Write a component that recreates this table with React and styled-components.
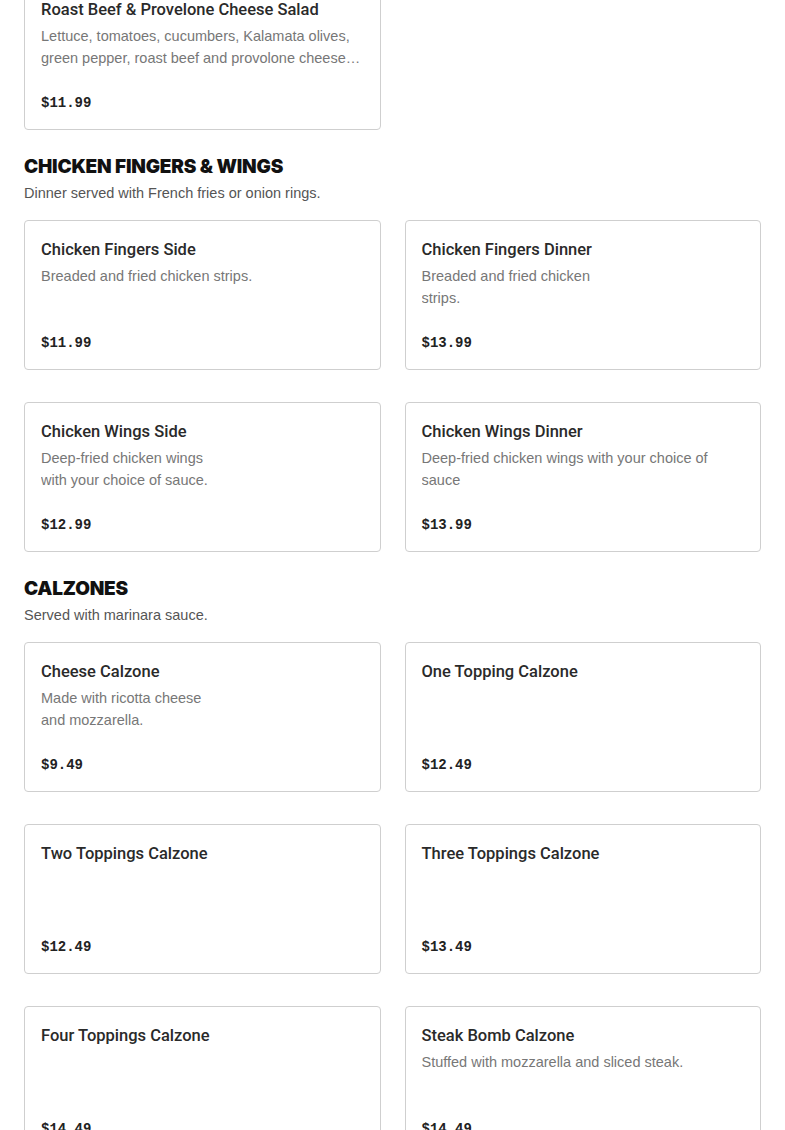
import React from "react";
import styled, { createGlobalStyle } from "styled-components";

const Global = createGlobalStyle`
  html, body { margin: 0; padding: 0; background: #ffffff; }
  body { font-family: "Liberation Sans", Arial, sans-serif; color: #2d2d2d; }
  * { box-sizing: border-box; }
`;

const Page = styled.main`
  display: flex;
  flex-direction: column;
  gap: 24px;
  padding: 0 24px 40px;
  margin-top: -20px;
`;

const Section = styled.section`
  display: flex;
  flex-direction: column;
`;

const SectionTitle = styled.h2`
  margin: 1px 0 0;
  font-family: "Inter", "Liberation Sans", sans-serif;
  font-weight: 900;
  font-size: 19px;
  line-height: 24px;
  letter-spacing: -0.2px;
  color: #111;
`;

const SectionNote = styled.p`
  margin: 3px 0 16px;
  font-size: 14.5px;
  line-height: 22px;
  color: #555;
`;

const Grid = styled.div`
  display: grid;
  grid-template-columns: 1fr 1fr;
  column-gap: 24px;
  row-gap: 32px;
`;

const Card = styled.article`
  height: 150px;
  border: 1px solid #cfcfcf;
  border-radius: 4px;
  padding: 18px 16px 16px 16px;
  display: flex;
  flex-direction: column;
  background: #fff;
`;

const Title = styled.h3`
  margin: 0;
  font-family: "Roboto", "Liberation Sans", sans-serif;
  font-size: 16.5px;
  font-weight: 500;
  line-height: 22px;
  color: #2a2a2a;
`;

const Desc = styled.p`
  margin: 4px 0 0;
  font-size: 14.5px;
  line-height: 22px;
  color: #777;
  max-width: ${(p) => (p.$narrow ? "178px" : "none")};
  overflow: hidden;
  display: -webkit-box;
  -webkit-line-clamp: 2;
  -webkit-box-orient: vertical;
`;

const Price = styled.div`
  margin-top: auto;
  font-family: "Liberation Mono", "DejaVu Sans Mono", monospace;
  font-weight: 700;
  font-size: 14px;
  line-height: 20px;
  color: #222;
`;

const Item = ({ name, desc, price, narrow }) => (
  <Card>
    <Title>{name}</Title>
    {desc && <Desc $narrow={narrow}>{desc}</Desc>}
    <Price>{price}</Price>
  </Card>
);

const sections = [
  {
    items: [
      {
        name: "Roast Beef & Provelone Cheese Salad",
        desc: "Lettuce, tomatoes, cucumbers, Kalamata olives, green pepper, roast beef and provolone cheese. Served with your choice of dressing.",
        price: "$11.99",
      },
    ],
  },
  {
    title: "CHICKEN FINGERS & WINGS",
    note: "Dinner served with French fries or onion rings.",
    items: [
      { name: "Chicken Fingers Side", desc: "Breaded and fried chicken strips.", price: "$11.99" },
      { name: "Chicken Fingers Dinner", desc: "Breaded and fried chicken strips.", price: "$13.99", narrow: true },
      { name: "Chicken Wings Side", desc: "Deep-fried chicken wings with your choice of sauce.", price: "$12.99", narrow: true },
      { name: "Chicken Wings Dinner", desc: "Deep-fried chicken wings with your choice of sauce", price: "$13.99" },
    ],
  },
  {
    title: "CALZONES",
    note: "Served with marinara sauce.",
    items: [
      { name: "Cheese Calzone", desc: "Made with ricotta cheese and mozzarella.", price: "$9.49", narrow: true },
      { name: "One Topping Calzone", price: "$12.49" },
      { name: "Two Toppings Calzone", price: "$12.49" },
      { name: "Three Toppings Calzone", price: "$13.49" },
      { name: "Four Toppings Calzone", price: "$14.49" },
      { name: "Steak Bomb Calzone", desc: "Stuffed with mozzarella and sliced steak.", price: "$14.49" },
    ],
  },
];

export default function App() {
  return (
    <>
      <Global />
      <Page>
        {sections.map((s, i) => (
          <Section key={i}>
            {s.title && <SectionTitle>{s.title}</SectionTitle>}
            {s.note && <SectionNote>{s.note}</SectionNote>}
            <Grid>
              {s.items.map((it) => (
                <Item key={it.name} {...it} />
              ))}
            </Grid>
          </Section>
        ))}
      </Page>
    </>
  );
}
